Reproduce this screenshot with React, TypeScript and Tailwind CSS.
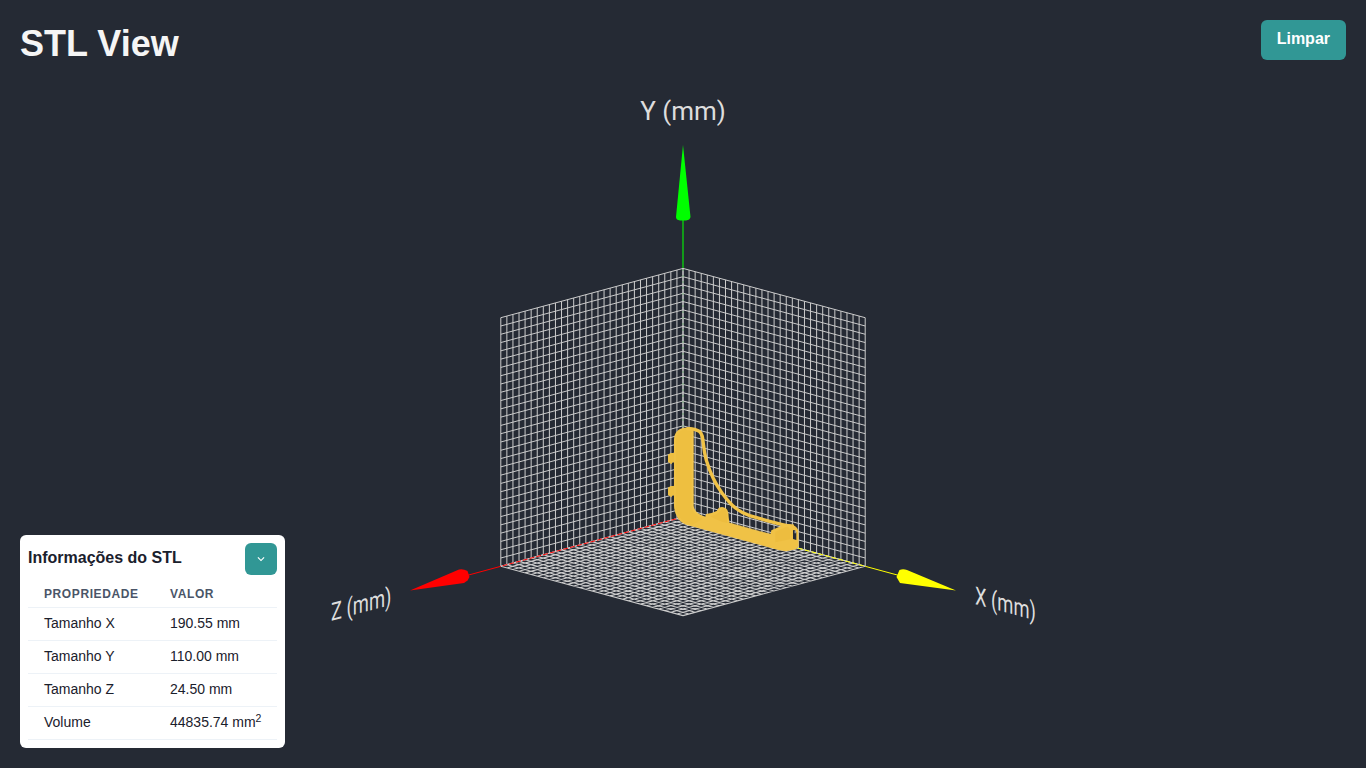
import React from "react";

const DIVISIONS = 30;
const STEPS = Array.from({ length: DIVISIONS + 1 }, (_, i) => i / DIVISIONS);

type Point = [number, number];

const ORIGIN: Point = [683, 517];
const AXIS_X: Point = [182.2, 49.3];
const AXIS_Z: Point = [-182.2, 49.3];
const AXIS_Y: Point = [0, -248.6];

// Path data for a square grid spanned by two projected axes.
function gridPath(u: Point, v: Point): string {
  const line = (a: Point, b: Point, t: number) => {
    const x = ORIGIN[0] + a[0] * t;
    const y = ORIGIN[1] + a[1] * t;
    return `M${x.toFixed(2)} ${y.toFixed(2)}L${(x + b[0]).toFixed(2)} ${(y + b[1]).toFixed(2)}`;
  };
  return STEPS.map((t) => line(u, v, t) + line(v, u, t)).join("");
}

const rows = [
  { name: "Tamanho X", value: "190.55 mm" },
  { name: "Tamanho Y", value: "110.00 mm" },
  { name: "Tamanho Z", value: "24.50 mm" },
  { name: "Volume", value: "44835.74 mm", exponent: "2" },
];

function Model() {
  return (
    <g transform="translate(650 410) scale(0.33333)">
      <path fill="#eebf42" d="M54 134L62 129H74V158L68 157L64 163L54 156ZM54 233L62 228H74V257L68 256L64 262L54 255Z" />
      <path
        fill="#f0c246"
        d="M72 90C72 70 82 58 98 54Q112 50 131 56L131 288Q134 312 166 320L168 312Q184 311 200 303L206 294Q218 287 229 296Q236 303 236 320L238 338L352 370L362 371L364 361L399 346Q406 341 420 343Q439 346 445 361L446 409L438 418L408 424L385 420L120 347Q96 343 83 324Q72 306 72 286Z"
      />
      <path fill="#eebf40" d="M78 88Q80 66 104 58L124 62V290Q129 315 158 326L128 344Q102 340 88 321Q78 305 78 286Z" />
      <path
        fill="none"
        stroke="#f1c347"
        strokeWidth="10"
        d="M110 56Q132 54 148 64C164 76 155 102 169 151C181 191 198 225 216 249C246 290 266 306 299 317Q350 332 397 344Q420 350 432 348"
      />
      <path fill="#edbd3f" d="M181 319Q205 314 216 296Q228 294 230 310L232 339Q207 335 181 319ZM376 365L408 351Q418 348 420 362V388L376 397Z" />
      <path fill="none" stroke="#f4cd5c" strokeWidth="2" strokeOpacity="0.6" d="M128 64V288Q133 311 166 322M238 338L356 371" />
      <path fill="#252a34" d="M429 361Q437 358 439 368V390L429 387Z" />
      <path fill="#cccccc" d="M434 362H437V370H434Z" />
    </g>
  );
}

function Scene() {
  return (
    <svg
      className="absolute inset-0 size-full"
      viewBox="0 0 1366 768"
      role="img"
      aria-label="STL"
    >
      <g fill="none" stroke="#cccccc" strokeWidth="1">
        <path d={gridPath(AXIS_X, AXIS_Y)} />
        <path d={gridPath(AXIS_Z, AXIS_Y)} />
        <path d={gridPath(AXIS_X, AXIS_Z)} strokeWidth="1.1" />
      </g>

      <path d="M683 268V219" stroke="#129a19" strokeWidth="2" />
      <path d="M683 517V268" stroke="#129a19" strokeOpacity="0.4" strokeDasharray="2 4" />
      <path d="M683 145L690.5 217Q690 220 686 220.500H680Q676 220 676 217Z" fill="#00ff00" />

      <path d="M683 517L500.800 566.300" stroke="#ff0000" strokeDasharray="5 2" />
      <path d="M500.800 566.300L468 575.200" stroke="#ff0000" />
      <path d="M410 590.500L459 569.500Q463 568.500 467.500 571L469.500 577L467.500 580.500L464 583Z" fill="#ff0000" />

      <path d="M683 517L865.200 566.300" stroke="#ffff00" strokeDasharray="5 2" />
      <path d="M865.200 566.300L898 575.200" stroke="#ffff00" />
      <path d="M956 590.500L907 570Q903 568.500 899.500 570L896.500 577L900 583Z" fill="#ffff00" />

      <Model />

      <g fill="#dddddd" className="font-[Roboto,sans-serif] text-[26px]">
        <text x="683" y="120" textAnchor="middle">Y (mm)</text>
        <text transform="matrix(0.707 -0.191 0 0.963 331 621)">Z (mm)</text>
        <text transform="matrix(0.707 0.191 0 0.963 975 604)">X (mm)</text>
      </g>
    </svg>
  );
}

function InfoPanel() {
  return (
    <section className="w-[265px] rounded-md bg-white p-2 text-[#1a202c]">
      <div className="mb-2 flex items-start justify-between">
        <h2 className="text-base leading-[30px] font-bold">Informações do STL</h2>
        <button
          type="button"
          aria-label="Recolher"
          className="flex size-8 items-center justify-center rounded-md bg-[#319795] text-white"
        >
          <svg viewBox="0 0 24 24" className="size-3.5" fill="currentColor" aria-hidden="true">
            <path d="M16.59 8.590L12 13.170 7.410 8.590 6 10l6 6 6-6z" />
          </svg>
        </button>
      </div>
      <table className="w-full table-fixed border-collapse text-left">
        <thead>
          <tr className="border-b border-[#edf2f7] text-xs leading-4 tracking-wider text-[#4a5568] uppercase">
            <th scope="col" className="w-[126px] pt-[3px] pb-[5px] pl-4 font-bold">Propriedade</th>
            <th scope="col" className="pt-[3px] pb-[5px] pl-4 font-bold">Valor</th>
          </tr>
        </thead>
        <tbody>
          {rows.map((row) => (
            <tr key={row.name} className="border-b border-[#edf2f7] text-sm leading-4">
              <td className="pt-[7px] pb-[9px] pl-4">{row.name}</td>
              <td className="pt-[7px] pb-[9px] pl-4 whitespace-nowrap">
                {row.value}
                {row.exponent && <sup>{row.exponent}</sup>}
              </td>
            </tr>
          ))}
        </tbody>
      </table>
    </section>
  );
}

export default function App() {
  return (
    <main className="relative flex min-h-screen flex-col justify-between bg-[#252a34] p-5 font-['Liberation_Sans',Arial,sans-serif]">
      <Scene />
      <header className="relative flex items-start justify-between">
        <h1 className="text-4xl leading-12 font-bold text-[#f5f5f5]">STL View</h1>
        <button
          type="button"
          className="h-10 rounded-md bg-[#319795] px-4 pb-0.5 text-base font-bold text-white"
        >
          Limpar
        </button>
      </header>
      <div className="relative flex">
        <InfoPanel />
      </div>
    </main>
  );
}
